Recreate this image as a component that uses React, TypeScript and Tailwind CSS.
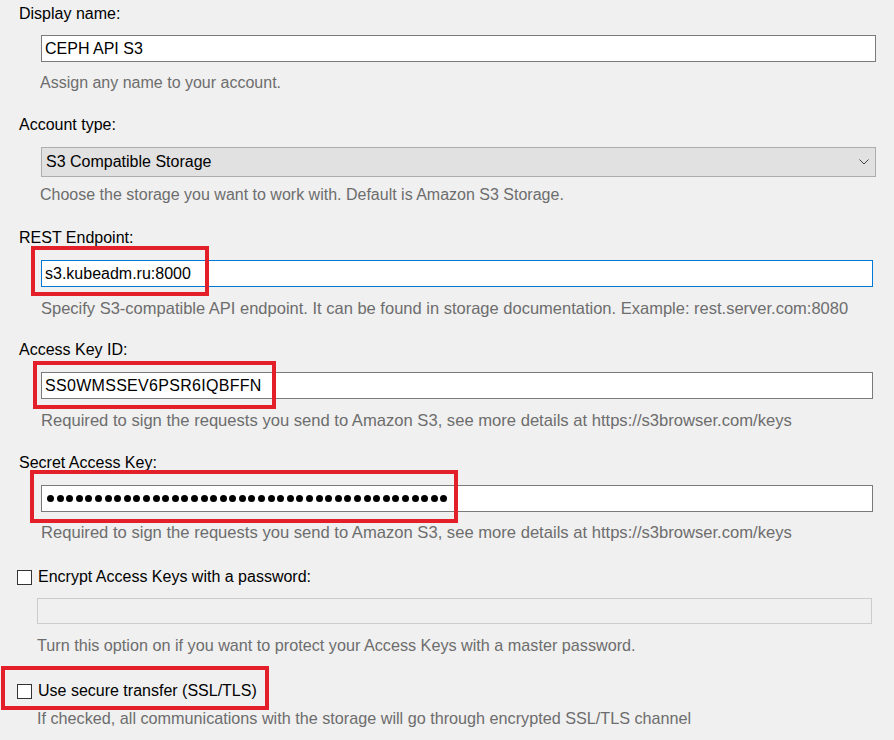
import React from "react";

const font = { fontFamily: '"Liberation Sans", Arial, sans-serif' };

function Label({ children, className = "" }: { children: React.ReactNode; className?: string }) {
  return <div className={`ml-[19px] text-black ${className}`}>{children}</div>;
}

function Hint({ children, className = "" }: { children: React.ReactNode; className?: string }) {
  return <div className={`text-[#6d6d6d] whitespace-nowrap ${className}`}>{children}</div>;
}

function TextBox({ value, focused = false, className = "" }: { value?: string; focused?: boolean; className?: string }) {
  return (
    <div
      className={`h-[27px] bg-white border flex items-center pl-[3px] text-black ${
        focused ? "border-[#0078d7]" : "border-[#7a7a7a]"
      } ${className}`}
    >
      {value}
    </div>
  );
}

function CheckRow({ label, className = "" }: { label: string; className?: string }) {
  return (
    <div className={`flex items-center ml-[17px] ${className}`}>
      <span className="w-[15px] h-[15px] border border-[#333] bg-white" />
      <span className="ml-[6px] text-black">{label}</span>
    </div>
  );
}

export default function App() {
  const dots = Array.from({ length: 42 });
  return (
    <div
      className="relative w-[894px] h-[740px] bg-[#f0f0f0] overflow-hidden text-[16px] leading-[20px] flex flex-col"
      style={font}
    >
      <Label className="mt-[4px]">Display name:</Label>
      <TextBox value="CEPH API S3" className="mt-[11px] ml-[41px] w-[835px]" />
      <Hint className="mt-[11px] ml-[40px]">Assign any name to your account.</Hint>

      <Label className="mt-[22px]">Account type:</Label>
      <div className="mt-[12px] ml-[41px] w-[835px] h-[30px] bg-[#e1e1e1] border border-[#adadad] flex items-center justify-between pl-[4px] pr-[6px] text-black">
        <span>S3 Compatible Storage</span>
        <svg width="10" height="6" viewBox="0 0 10 6" fill="none">
          <path d="M0.5 0.5 L5 5 L9.5 0.5" stroke="#444" strokeWidth="1" />
        </svg>
      </div>
      <Hint className="mt-[8px] ml-[40px]">Choose the storage you want to work with. Default is Amazon S3 Storage.</Hint>

      <Label className="mt-[23px]">REST Endpoint:</Label>
      <TextBox value="s3.kubeadm.ru:8000" focused className="mt-[12px] ml-[41px] w-[832px]" />
      <Hint className="mt-[11px] ml-[41px] text-[16.5px]">
        Specify S3-compatible API endpoint. It can be found in storage documentation. Example: rest.server.com:8080
      </Hint>

      <Label className="mt-[22px]">Access Key ID:</Label>
      <TextBox value="SS0WMSSEV6PSR6IQBFFN" className="mt-[12px] ml-[41px] w-[832px] tracking-[0.3px]" />
      <Hint className="mt-[12px] ml-[41px] text-[16.6px]">
        Required to sign the requests you send to Amazon S3, see more details at https://s3browser.com/keys
      </Hint>

      <Label className="mt-[22px]">Secret Access Key:</Label>
      <div className="mt-[12px] ml-[41px] w-[832px] h-[27px] bg-white border border-[#7a7a7a] flex items-center pl-[5px] gap-[2.6px]">
        {dots.map((_, i) => (
          <span key={i} className="w-[7px] h-[7px] rounded-full bg-black" />
        ))}
      </div>
      <Hint className="mt-[11px] ml-[41px] text-[16.6px]">
        Required to sign the requests you send to Amazon S3, see more details at https://s3browser.com/keys
      </Hint>

      <CheckRow label="Encrypt Access Keys with a password:" className="mt-[24px]" />
      <div className="mt-[11px] ml-[37px] w-[835px] h-[26px] bg-[#f0f0f0] border border-[#cccccc]" />
      <Hint className="mt-[11px] ml-[37px] text-[16.2px]">
        Turn this option on if you want to protect your Access Keys with a master password.
      </Hint>

      <CheckRow label="Use secure transfer (SSL/TLS)" className="mt-[26px]" />
      <Hint className="mt-[7px] ml-[37px] text-[16.2px]">
        If checked, all communications with the storage will go through encrypted SSL/TLS channel
      </Hint>

      {/* red highlight boxes drawn over the form */}
      <div className="absolute left-[31px] top-[246px] w-[178px] h-[50px] border-4 border-[#e3202a]" />
      <div className="absolute left-[33px] top-[361px] w-[243px] h-[48px] border-4 border-[#e3202a]" />
      <div className="absolute left-[30px] top-[470px] w-[428px] h-[53px] border-4 border-[#e3202a]" />
      <div className="absolute left-[1px] top-[666px] w-[268px] h-[44px] border-4 border-[#e3202a]" />
    </div>
  );
}
